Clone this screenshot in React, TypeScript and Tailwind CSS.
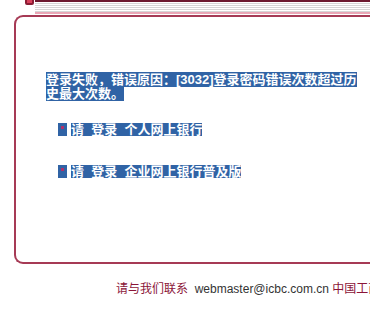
// ICBC 登录失败提示页 — 选中状态下的错误信息框

const LINKS = ['请 登录 个人网上银行', '请 登录 企业网上银行普及版'];

function Bullet() {
  return (
    <span className="inline-flex w-[9px] h-[13px] bg-[#3063a5] items-start justify-center pt-[3px] mr-[4px] align-top">
      <span className="w-[3px] h-[3px] bg-[#b0306a]" />
    </span>
  );
}

function TopStrip() {
  return (
    <div className="flex h-[15px]">
      <div className="w-[25px] shrink-0" />
      <div className="w-[10px] shrink-0 h-[5px] overflow-hidden">
        <div className="-mt-[4px] w-[9px] h-[9px] border-2 border-[#8a1d35] bg-[#d8405a] rounded-[2px]" />
      </div>
      <div className="flex-1 h-[14px] border-t-2 border-[#6d1a30] border-b-2 border-b-[#eaa6b6] bg-[repeating-linear-gradient(to_bottom,#ffffff_0px,#ffffff_1px,#d6d6d6_1px,#d6d6d6_2px)]" />
    </div>
  );
}

export default function App() {
  return (
    <div
      className="w-[370px] h-[316px] overflow-hidden bg-white"
      style={{ fontFamily: '"Liberation Sans", "Noto Sans CJK SC", sans-serif' }}
    >
      <TopStrip />
      <div className="ml-[14px] w-[420px] h-[249px] border-2 border-r-0 border-[#a63a55] rounded-l-[9px] pl-[30px] pt-[56px]">
        <p className="w-[316px] text-[13px] leading-[14px] font-bold text-white">
          <span className="bg-[#3063a5]">登录失败，错误原因：[3032]登录密码错误次数超过历史最大次数。</span>
        </p>
        <div className="mt-[22px] ml-[12px] flex flex-col gap-[29px]">
          {LINKS.map((t) => (
            <div key={t} className="flex items-start h-[13px] text-[13px] leading-[13px] font-bold text-white whitespace-pre">
              <Bullet />
              <span className="bg-[#3063a5] h-[13px]">{t.replace(/ /g, '  ')}</span>
            </div>
          ))}
        </div>
      </div>
      <div className="pt-[18px] pl-[116px] text-[12px] leading-[14px] whitespace-nowrap">
        <span className="text-[#8b1538]">请与我们联系</span>
        <span className="text-[#333333]">&nbsp; webmaster@icbc.com.cn</span>
        <span className="text-[#8b1538]"> 中国工商银行版权所有</span>
      </div>
    </div>
  );
}
